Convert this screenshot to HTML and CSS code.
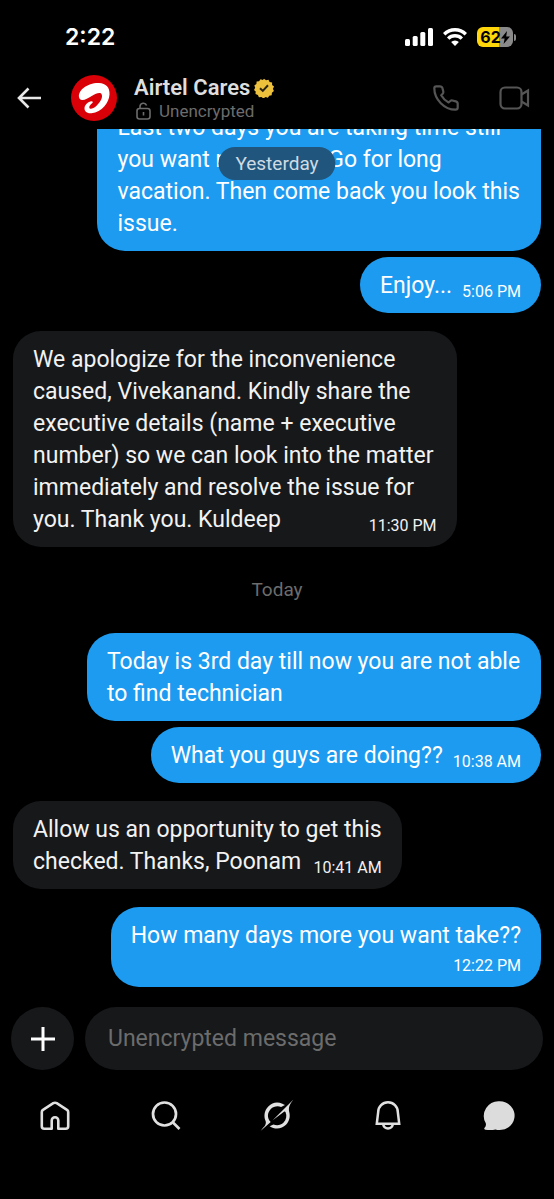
FILE: index.html
```html
<!DOCTYPE html>
<html lang="en">
  <head>
    <meta charset="UTF-8" />
    <meta name="viewport" content="width=device-width, initial-scale=1.0" />
    <title>Airtel Cares</title>
    <link rel="stylesheet" href="styles.css">
  </head>
  <body>
    <!-- status bar -->
    <div class="status">
      <span class="clock">2:22</span>
      <div class="status-icons">
        <svg width="28" height="18" viewBox="0 0 28 18" fill="#fff">
          <rect x="0" y="11" width="5" height="7" rx="1.5" />
          <rect x="7.7" y="8" width="5" height="10" rx="1.5" />
          <rect x="15.3" y="4" width="5" height="14" rx="1.5" />
          <rect x="23" y="0" width="5" height="18" rx="1.5" />
        </svg>
        <svg width="24" height="18" viewBox="0 0 24 18" fill="none" stroke="#fff" stroke-width="3.4">
          <path d="M1.2 6.2a15.4 15.4 0 0 1 21.6 0" />
          <path d="M5.2 10.6a9.6 9.6 0 0 1 13.6 0" />
          <path d="M12 18l-3.9-3.9a5.5 5.5 0 0 1 7.8 0z" fill="#fff" stroke="none" />
        </svg>
        <div class="battery">
          <span class="level">62<svg width="9" height="13" viewBox="0 0 9 13"><path d="M6 0L0 7.4h3.6L2.6 13 9 5.4H5.2z" fill="#000" /></svg></span>
          <span class="nub"></span>
        </div>
      </div>
    </div>

    <!-- chat header -->
    <header class="header">
      <button class="icon-btn" aria-label="Back">
        <svg width="24" height="22" viewBox="0 0 24 22" fill="none" stroke="#e7e7e7" stroke-width="2.6">
          <path d="M11.5 1.5L2 11l9.5 9.5M2 11h22" />
        </svg>
      </button>
      <svg class="avatar" width="46" height="46" viewBox="0 0 46 46">
        <circle cx="23" cy="23" r="23" fill="#d90007" />
        <path d="M8 22C7 15 17 7.500 28 8c7 .3 11 4.500 10.500 11.500C38 28 31 37 20.500 38.300c-4 .4-7-1.500-7-4.700 0-3.600 3-6.600 6.500-7.400 1.600-.3 2.400.8 1.300 1.900-2 1.800-3.300 3.200-3 4.600.5 2 4 1 7-1.700 4-3.600 6.700-8.500 5.400-11.500-1.300-2.800-5-1.500-10 1.500-3.700 2.200-7 4.300-9.700 4C9.300 24.800 8.300 23.700 8 22z" fill="#fff" />
      </svg>
      <div class="who">
        <h1 class="name">Airtel Cares
          <svg width="20" height="20" viewBox="0 0 20 20">
            <path d="M10 .8l2 1.500 2.500-.6 1.100 2.200 2.500.6v2.500l2 1.600-1.200 2.200 1 2.300-2 1.600-.2 2.500-2.500.5-1.300 2.100-2.400-.7-2.100 1.400-2-1.600-2.500.4-1-2.300-2.400-.9.200-2.500L0 12l1.200-2.200L.3 7.500l2.100-1.400.2-2.500 2.500-.4L6.500 1.200l2.400.8z" fill="#edc13c" />
            <path d="M6 10.200l2.800 2.700L14 7.300" fill="none" stroke="#2b2414" stroke-width="2" />
          </svg>
        </h1>
        <p class="lock">
          <svg width="15" height="18" viewBox="0 0 15 18" fill="none" stroke="#6c6c6c" stroke-width="1.600">
            <rect x="1" y="6.500" width="13" height="10.500" rx="2.500" />
            <path d="M4 6.500V4.500a3.400 3.400 0 0 1 6.600-1M7.500 10v3.500" />
          </svg>
          Unencrypted
        </p>
      </div>
      <button class="icon-btn call" aria-label="Call">
        <svg width="26" height="26" viewBox="0 0 26 26" fill="none" stroke="#555" stroke-width="2.200" stroke-linejoin="round">
          <path d="M3.200 1.300h3.700c1.300 0 2.200.6 2.500 1.800l.9 3.500c.2.900 0 1.600-.6 2.200L8.200 10.200c1.700 3 4 5.500 7.400 7.300l1.700-1.500c.6-.5 1.300-.7 2.100-.5l3.400.9c1.200.3 1.900 1.200 1.900 2.400v3.700c0 1.200-.9 2.200-2.200 2.200C11.500 24.700 1.300 14.500 1.300 3.300c0-1.100.8-2 1.900-2z" />
        </svg>
      </button>
      <button class="icon-btn" aria-label="Video call">
        <svg width="31" height="24" viewBox="0 0 31 24" fill="none" stroke="#555" stroke-width="2.200">
          <rect x="1.500" y="1.500" width="21" height="21" rx="4.500" />
          <path d="M22.500 8.500l6.500-4v15L22.500 15.500" />
        </svg>
      </button>
    </header>

    <!-- messages -->
    <main class="chat">
      <div class="pill">Yesterday</div>
      <p class="msg sent">Last two days you are taking time still you want rest again. Go for long vacation. Then come back you look this issue.</p>
      <p class="msg sent">Enjoy...<time>5:06 PM</time></p>
      <p class="msg received first">We apologize for the inconvenience caused, Vivekanand. Kindly share the executive details (name + executive number) so we can look into the matter immediately and resolve the issue for you. Thank you. Kuldeep<time>11:30 PM</time></p>
      <div class="day">Today</div>
      <p class="msg sent wide">Today is 3rd day till now you are not able to find technician</p>
      <p class="msg sent">What you guys are doing??<time>10:38 AM</time></p>
      <p class="msg received first">Allow us an opportunity to get this<br>checked. Thanks, Poonam<time>10:41 AM</time></p>
      <p class="msg sent first">How many days more you want take??<time class="below">12:22 PM</time></p>
    </main>

    <!-- composer -->
    <form class="composer">
      <button class="add" type="button" aria-label="Add">
        <svg width="24" height="24" viewBox="0 0 24 24" stroke="#fff" stroke-width="3"><path d="M12 0v24M0 12h24" /></svg>
      </button>
      <input class="field" type="text" placeholder="Unencrypted message" aria-label="Message">
    </form>

    <!-- bottom tabs -->
    <nav class="tabs">
      <a href="#" aria-label="Home">
        <svg width="32" height="32" viewBox="0 0 32 32" fill="none" stroke="#e0e0e0" stroke-width="2.600" stroke-linejoin="round">
          <path d="M14.300 3.200L4 9.800c-.8.500-1.200 1.200-1.200 2.100v14.300c0 1.500 1 2.500 2.500 2.500h7.400v-8.200a3.300 3.300 0 0 1 6.600 0v8.200h7.400c1.500 0 2.500-1 2.500-2.500V11.900c0-.9-.4-1.600-1.200-2.100L17.700 3.200c-1.200-.7-2.200-.7-3.400 0z" />
        </svg>
      </a>
      <a href="#" aria-label="Search">
        <svg width="32" height="32" viewBox="0 0 32 32" fill="none" stroke="#e0e0e0" stroke-width="2.700">
          <circle cx="14.500" cy="14" r="11.500" />
          <path d="M22.500 22l7 7" />
        </svg>
      </a>
      <a href="#" aria-label="Grok">
        <svg width="34" height="34" viewBox="0 0 34 34" fill="#e0e0e0">
          <path d="M12.700 21.200L24 12.800c.6-.4 1.300-.2 1.600.4 1.400 3.400.8 7.400-2 10.200-2.800 2.800-6.600 3.400-10.200 2l-3.800 1.800c5.500 3.800 12.200 2.800 16.400-1.400 3.300-3.300 4.300-7.900 3.400-12-1.400-5.900.3-8.200 3.800-13.100L28.500 5.400z" />
          <path d="M10.700 23c-4-3.800-3.300-9.600.1-13 2.500-2.500 6.700-3.600 10.300-2.100l3.900-1.800c-.7-.5-1.600-1-2.600-1.400A13 13 0 0 0 8.300 7.500c-3.700 3.700-4.800 9.300-2.900 14 1.500 3.500-.9 6-3.300 8.500L.8 31.800z" />
        </svg>
      </a>
      <a href="#" aria-label="Notifications">
        <svg width="32" height="32" viewBox="0 0 32 32" fill="none" stroke="#e0e0e0" stroke-width="2.500">
          <path d="M4.800 23.700L6.200 12a9.800 9.800 0 0 1 19.600 0l1.400 11.700zM11 24c.7 2.800 2.500 4.500 5 4.500s4.300-1.700 5-4.500" />
        </svg>
      </a>
      <a href="#" aria-label="Messages">
        <svg width="32" height="32" viewBox="0 0 32 32" fill="#dcdcdc">
          <path d="M16.500 1.200a15 14.400 0 1 1-4.200 28.200c-2.600.9-6 .9-10 .3-1.300-.2-1.400-1.500-.5-2.300 1.100-1.100 1.400-2.600.9-4.300A14.800 14.800 0 0 1 16.500 1.200z" />
        </svg>
      </a>
    </nav>
  </body>
</html>
```
FILE: styles.css
```css
* {
  box-sizing: border-box;
}
body {
  margin: 0;
  height: 100vh;
  display: flex;
  flex-direction: column;
  background-color: #000;
  color: #fff;
  font-family: Roboto, "Noto Sans", sans-serif;
  font-size: 23px;
  line-height: 32px;
}
button {
  border: none;
  padding: 0;
  background: none;
  display: flex;
  align-items: center;
  justify-content: center;
}
svg {
  display: block;
  flex: none;
}
p,
h1 {
  margin: 0;
}

/* status bar */
.status {
  height: 74px;
  padding: 0 38px 0 65px;
  display: flex;
  align-items: center;
  justify-content: space-between;
}
.clock {
  font-family: Inter, sans-serif;
  font-size: 23px;
  font-weight: 600;
}
.status-icons {
  display: flex;
  align-items: center;
  gap: 10px;
}
.battery {
  display: flex;
  align-items: center;
  gap: 1px;
}
.level {
  width: 36px;
  height: 20px;
  border-radius: 6px;
  background: linear-gradient(to right, #ffd60a 62%, #8a8a8a 62%);
  color: #000;
  font-family: Inter, sans-serif;
  font-size: 16px;
  font-weight: 700;
  line-height: 20px;
  display: flex;
  align-items: center;
  justify-content: center;
}
.nub {
  width: 2px;
  height: 7px;
  border-radius: 0 2px 2px 0;
  background-color: #8a8a8a;
}

/* header */
.header {
  height: 55px;
  padding: 0 24px 8px 17px;
  display: flex;
  align-items: center;
}
.avatar {
  margin: 0 17px 0 30px;
}
.who {
  flex: 1;
}
.name {
  display: flex;
  align-items: center;
  gap: 4px;
  color: #dedede;
  font-size: 22px;
  font-weight: 600;
  line-height: 26px;
}
.lock {
  display: flex;
  align-items: center;
  gap: 8px;
  padding-left: 2px;
  color: #6c6c6c;
  font-size: 17px;
  line-height: 20px;
}
.call {
  margin-right: 40px;
}

/* messages */
.chat {
  flex: 1;
  min-height: 0;
  padding: 0 13px 20px;
  display: flex;
  flex-direction: column;
  justify-content: flex-end;
  gap: 6px;
  overflow: hidden;
  position: relative;
}
.msg {
  flex: none;
  max-width: 84%;
  padding: 13px 20px 11px;
  border-radius: 28px;
}
.wide {
  max-width: 86%;
}
.sent {
  align-self: flex-end;
  background-color: #1d9bf0;
}
.received {
  align-self: flex-start;
  background-color: #16181a;
  color: #f2f2f2;
}
.first {
  margin-top: 12px;
}
.msg time {
  float: right;
  margin: 12px 0 0 10px;
  font-size: 16px;
  line-height: 20px;
}
.msg time.below {
  float: none;
  display: block;
  margin: 4px 0 0;
  text-align: right;
}
.day {
  flex: none;
  padding: 22px 0;
  color: #6c6c6c;
  font-size: 19px;
  line-height: 30px;
  text-align: center;
}
.pill {
  position: absolute;
  top: 18px;
  left: 50%;
  transform: translateX(-50%);
  padding: 0 17px;
  border-radius: 17px;
  background-color: #20567d;
  color: #d0dae2;
  font-size: 19px;
  line-height: 33px;
}

/* composer */
.composer {
  padding: 0 11px;
  display: flex;
  gap: 11px;
}
.add {
  width: 63px;
  height: 63px;
  border-radius: 50%;
  background-color: #16181a;
}
.field {
  flex: 1;
  min-width: 0;
  height: 63px;
  padding: 0 23px;
  border: none;
  border-radius: 32px;
  background-color: #16181a;
  color: #fff;
  font: inherit;
}
.field::placeholder {
  color: #6c6c6c;
}

/* tabs */
.tabs {
  height: 129px;
  padding-top: 29px;
  display: flex;
}
.tabs a {
  flex: 1;
  height: 34px;
  display: flex;
  align-items: center;
  justify-content: center;
}
```
